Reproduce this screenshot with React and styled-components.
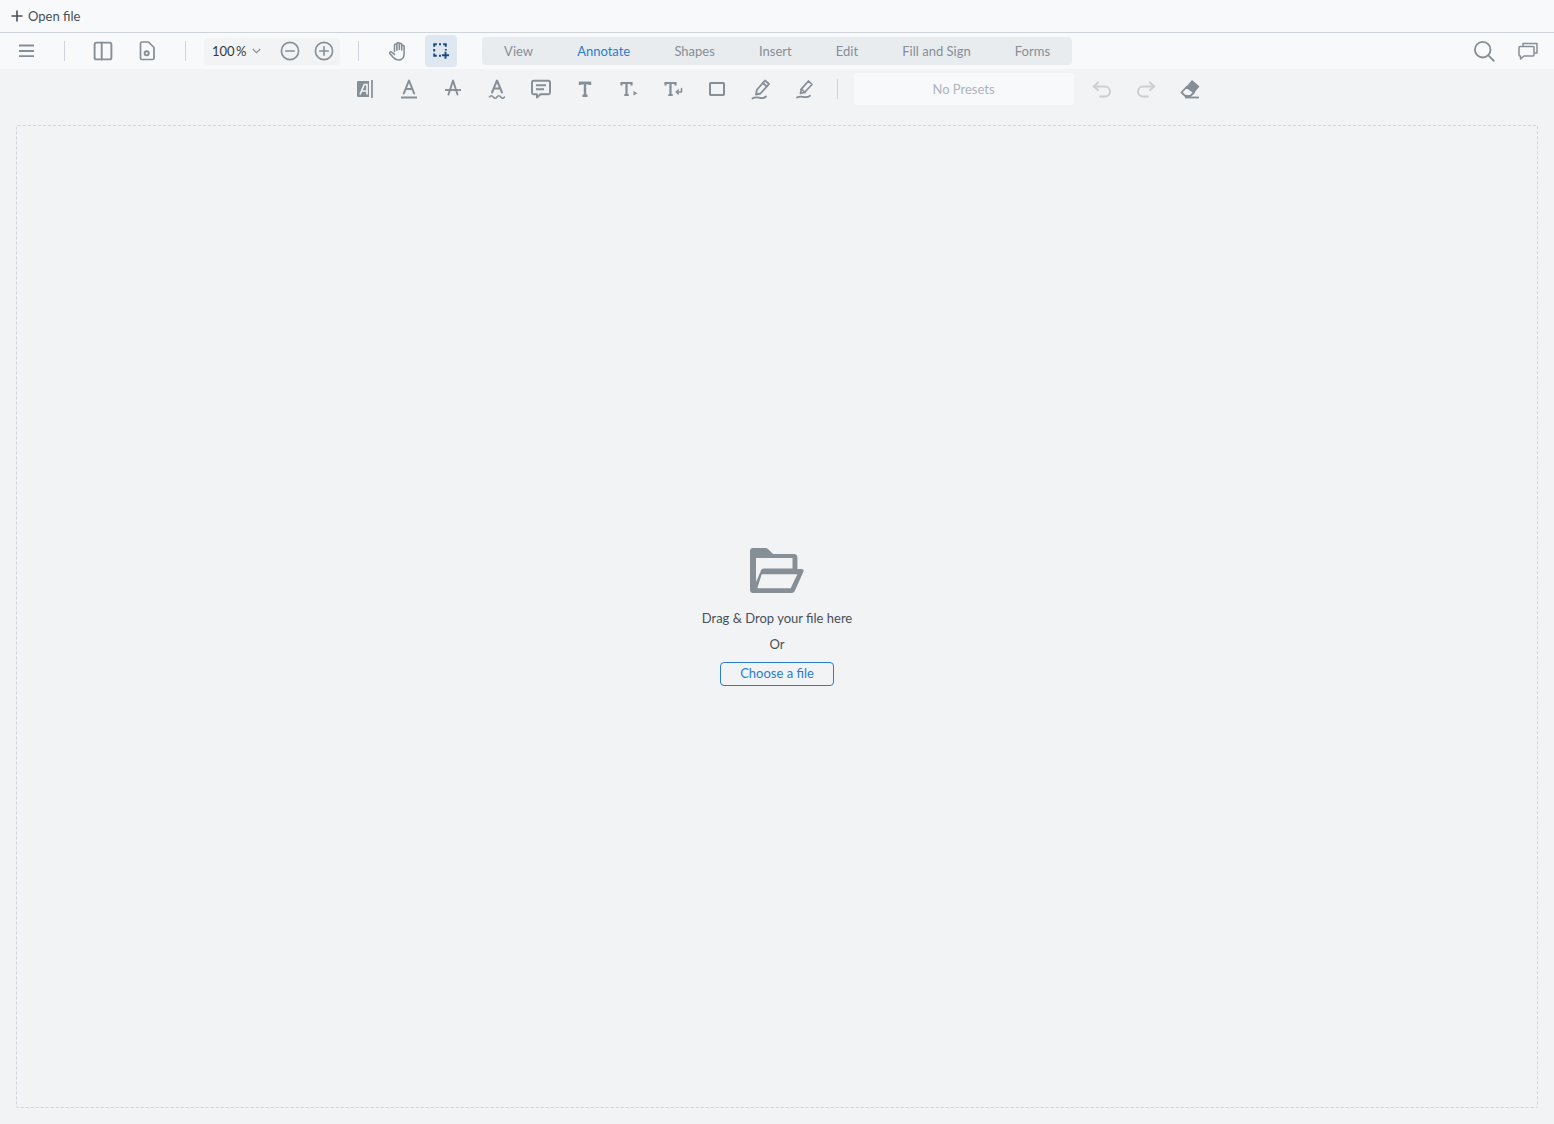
import React from 'react';
import styled, { createGlobalStyle } from 'styled-components';

const GlobalStyle = createGlobalStyle`
  html, body {
    margin: 0;
    padding: 0;
    height: 100%;
    background: #f1f3f5;
    font-family: Lato, "Open Sans", sans-serif;
  }
  svg {
    flex: none;
  }
`;

// icons are all drawn on a 24 box, stroke colour comes from the slot around them
const Svg = ({ size = 24, children, fill = 'none', sw = 2 }) => (
  <svg width={size} height={size} viewBox="0 0 24 24" fill={fill} stroke={fill === 'none' ? 'currentColor' : 'none'} strokeWidth={sw} strokeLinecap="round" strokeLinejoin="round">
    {children}
  </svg>
);

const MenuIcon = () => (
  <Svg sw={1.8}><path d="M5 6.500h15M5 12h15M5 17.200h15" strokeLinecap="butt" /></Svg>
);
const PanelIcon = () => (
  <Svg sw={1.9}><rect x="3.600" y="3.600" width="16.800" height="16.800" rx="2" /><path d="M10.700 3.600v16.800" /></Svg>
);
const FileGearIcon = () => (
  <Svg sw={1.7}>
    <path d="M7 3h6.500L19 8.500V19a1.500 1.500 0 0 1-1.500 1.500H7A1.500 1.500 0 0 1 5.500 19V4.500A1.500 1.500 0 0 1 7 3z" />
    <circle cx="11.700" cy="14.300" r="2.100" strokeWidth="1.900" />
  </Svg>
);
const MinusCircle = () => (
  <Svg sw={1.6}><circle cx="12" cy="12" r="8.600" /><path d="M7.800 12h8.400" /></Svg>
);
const PlusCircle = () => (
  <Svg sw={1.6}><circle cx="12" cy="12" r="8.600" /><path d="M7.800 12h8.400M12 7.800v8.400" /></Svg>
);
const HandIcon = () => (
  <Svg sw={1.6}>
    <path d="M8.500 12.500V6.200a1.200 1.200 0 0 1 2.400 0v5M10.900 10.500V4.800a1.200 1.200 0 0 1 2.400 0v5.700M13.300 10.500V5.600a1.200 1.200 0 0 1 2.400 0v5M15.700 11V7.400a1.200 1.200 0 0 1 2.400 0V15c0 3.600-2.400 6-5.600 6-2.600 0-4-1-5.400-2.800L3.900 14.600c-.9-1.100.7-2.500 1.800-1.500l2.800 2.200" />
  </Svg>
);
const SelectIcon = () => (
  <Svg sw={1.9}>
    <path d="M5.200 7.800V5.200h2.600M10 5.200h2M14.200 5.200h2.600v2.600M16.800 10v1.500M5.200 10v2.400M5.200 14.500v2.300h2.600M10 16.800h2" strokeLinecap="butt" strokeLinejoin="miter" />
    <path d="M16.500 12.800v7M13 16.300h7" strokeLinecap="butt" />
  </Svg>
);
const SearchIcon = () => (
  <Svg size={26} sw={1.7}><circle cx="10.800" cy="10.800" r="7.200" /><path d="M16 16l5 5" /></Svg>
);
const CommentsIcon = () => (
  <Svg sw={1.5}>
    <path d="M7 6.500V4.500h14v9.500h-2" />
    <path d="M4 7.500h13a1 1 0 0 1 1 1V16a1 1 0 0 1-1 1H8l-3.500 3v-3H4a1 1 0 0 1-1-1V8.500a1 1 0 0 1 1-1z" />
  </Svg>
);
const ReflowIcon = () => (
  <Svg>
    <path fill="currentColor" stroke="none" d="M5 4h11v16H5a1 1 0 0 1-1-1V5a1 1 0 0 1 1-1z" />
    <path d="M7 17.500L11.300 7.500H14V17.500M9 14H14" stroke="#f1f3f5" strokeWidth="1.700" strokeLinecap="butt" strokeLinejoin="miter" />
    <path d="M19 3v18" strokeWidth="1.700" strokeLinecap="butt" />
  </Svg>
);
const UnderlineIcon = () => (
  <Svg sw={2}><path d="M6.800 16.500L12 3.500l5.200 13M8.600 12h6.800" /><path d="M4 20.500h16" strokeLinecap="butt" /></Svg>
);
const StrikeIcon = () => (
  <Svg sw={1.900}><path d="M7.500 17.500L12 3.500l4.500 14" /><path d="M4 13h16" strokeLinecap="butt" /></Svg>
);
const SquigglyIcon = () => (
  <Svg sw={2}>
    <path d="M7 15.500L12 3.500l5 12M8.800 11.500h6.400" />
    <path d="M4.500 20c1.300-1.800 2.500-1.800 3.800 0s2.400 1.800 3.700 0 2.500-1.800 3.800 0 2.400 1.800 3.700 0" strokeWidth="1.500" />
  </Svg>
);
const NoteIcon = () => (
  <Svg sw={1.900}>
    <path d="M4.500 3.800h15A1.500 1.500 0 0 1 21 5.300v10.500a1.500 1.500 0 0 1-1.500 1.500H11.500l-3.500 3.300v-3.300H4.500A1.500 1.500 0 0 1 3 15.800V5.300a1.500 1.500 0 0 1 1.500-1.500z" />
    <path d="M7 8.300h10M7 12.300h8" strokeLinecap="butt" />
  </Svg>
);
const TextIcon = () => (
  <Svg sw={2.400}><path d="M7 8V6h10v2" strokeLinecap="butt" strokeLinejoin="miter" /><path d="M6 6h12M12 6v13M9.500 18.800h5" strokeLinecap="butt" strokeLinejoin="miter" /></Svg>
);
const CalloutIcon = () => (
  <Svg sw={2.200}>
    <path d="M4.500 8.500V6h10v2.500M4 6h11M9.500 6v12.800M7.300 18h4.400" strokeLinecap="butt" strokeLinejoin="miter" />
    <path fill="currentColor" stroke="none" d="M16.500 14l4 2.300-4 2.300z" />
  </Svg>
);
const ReplaceIcon = () => (
  <Svg sw={2.200}>
    <path d="M4.500 8.500V6h10v2.500M4 6h11M9.500 6v12.800M7.300 18h4.400" strokeLinecap="butt" strokeLinejoin="miter" />
    <path d="M20.500 11.500v3.500h-5M17.300 13L15.300 15l2 2" strokeWidth="1.500" />
  </Svg>
);
const RectIcon = () => (
  <Svg sw={2}><rect x="5" y="6" width="14" height="12" rx=".8" /></Svg>
);
const PenIcon = () => (
  <Svg sw={1.800}>
    <path d="M16 3.500l4 3.500-8.500 9.500-4.500 1 .8-4.500z" />
    <path d="M13.800 6l4 3.500" />
    <path d="M3.500 21.500c3-2 5-1 8-.5 2.500.4 4 0 5.500-1.500" />
  </Svg>
);
const HighlightIcon = () => (
  <Svg sw={1.700}>
    <path d="M15.500 4l3.500 3.500-7.500 8-4 .8.700-4.200z" />
    <path d="M8.500 12l3.500 3.500" />
    <path d="M4 20.500c3-1.800 5-.8 8-.4 2 .2 3.500-.2 5-1.300" strokeWidth="1.800" />
  </Svg>
);
const UndoIcon = () => (
  <Svg sw={2}><path d="M8 5.500L3.800 9.500 8 13" /><path d="M4 9.500h11a5 5 0 0 1 0 10h-5" /></Svg>
);
const RedoIcon = () => (
  <Svg sw={2}><path d="M16 5.500l4.200 4-4.200 3.500" /><path d="M20 9.500H9a5 5 0 0 0 0 10h5" /></Svg>
);
const EraserIcon = () => (
  <Svg>
    <path fill="currentColor" stroke="none" d="M14 3l7.500 6.500-5.500 6.500-7.500-6.500z" />
    <path d="M8.500 10L3.500 15.500l3.800 3.500h5l3.700-3.500z" strokeWidth="1.800" />
    <path d="M7 20.500h14" strokeWidth="1.800" strokeLinecap="butt" />
  </Svg>
);
const PlusIcon = () => (
  <svg width="12" height="12" viewBox="0 0 12 12" stroke="currentColor" strokeWidth="1.600"><path d="M6 .5v11M.5 6h11" /></svg>
);
const ChevronIcon = () => (
  <svg width="9" height="6" viewBox="0 0 9 6" fill="none" stroke="currentColor" strokeWidth="1.100"><path d="M.8 1l3.700 3.700L8.200 1" /></svg>
);
const FolderIcon = () => (
  <svg width="54" height="46" viewBox="0 -1 54 46" fill="#868e96">
    <path fillRule="evenodd" d="M3 0h12c1.500 0 2.500.5 3.500 1.500L22.500 5.500c.6.400 1.200.5 2 .5H44c2.200 0 3.400 1.300 3.400 3.400V21h4c1.700 0 2.600 1.200 2 2.800L45 42.500c-.6 1.500-1.700 2.500-3.400 2.500H3c-2 0-3-1-3-3V3c0-2 1-3 3-3zM6 10v24l5-11.500c.6-1.400 1.600-2 3-2h28.500V10zM11.700 26.300L7.300 40.300h33.400l6.600-14z" />
  </svg>
);

const Page = styled.div`
  display: flex;
  flex-direction: column;
  height: 1124px;
  overflow: hidden;
  background: #f1f3f5;
`;

const TitleBar = styled.div`
  display: flex;
  align-items: center;
  gap: 5px;
  height: 32px;
  padding-left: 11px;
  background: #f8f9fa;
  border-bottom: 1px solid #ced4da;
  color: #495057;
  font-size: 13px;
`;

const MainBar = styled.div`
  display: flex;
  align-items: center;
  height: 36px;
  background: #f8f9fa;
  color: #868e96;
`;

const Slot = styled.div`
  flex: none;
  display: flex;
  align-items: center;
  justify-content: center;
  width: ${p => p.$w || 44}px;
  height: ${p => p.$h || 32}px;
  margin-left: ${p => p.$ml || 0}px;
  border-radius: 4px;
  color: ${p => p.$active ? '#1a4a7c' : 'inherit'};
  background: ${p => p.$active ? '#dfe7f0' : 'transparent'};
  opacity: ${p => p.$dim ? 0.35 : 1};
`;

const Divider = styled.div`
  flex: none;
  width: 1px;
  height: 20px;
  margin-left: ${p => p.$ml || 0}px;
  background: #ced4da;
`;

const ZoomBox = styled.div`
  flex: none;
  display: flex;
  align-items: center;
  width: 136px;
  height: 27px;
  margin-left: 18px;
  border-radius: 4px;
  background: #f1f3f5;
`;

const ZoomValue = styled.span`
  margin-left: 8px;
  margin-right: 5px;
  width: 35px;
  color: #343a40;
  font-size: 13px;
  word-spacing: -2px;
  white-space: nowrap;
`;

const Tabs = styled.div`
  flex: none;
  display: flex;
  align-items: center;
  width: 590px;
  height: 28px;
  margin-left: 25px;
  border-radius: 4px;
  background: #e9ecef;
`;

const Tab = styled.div`
  flex: none;
  padding: 0 22.08px;
  font-size: 13px;
  white-space: nowrap;
  color: ${p => p.$active ? '#2b7dd1' : '#868e96'};
`;

const RightGroup = styled.div`
  display: flex;
  margin-left: auto;
  margin-right: 4px;
`;

const ToolBar = styled.div`
  display: flex;
  align-items: center;
  justify-content: center;
  height: 32px;
  padding: 4px 0 3px;
  color: #868e96;
`;

const Presets = styled.div`
  flex: none;
  display: flex;
  align-items: center;
  justify-content: center;
  width: 220px;
  height: 32px;
  margin: 0 6px 0 16px;
  border-radius: 4px;
  background: #f8f9fa;
  color: #adb5bd;
  font-size: 13px;
`;

const Body = styled.div`
  flex: 1;
  display: flex;
  padding: 17px 16px 16px;
  min-height: 0;
`;

const DropZone = styled.div`
  flex: 1;
  display: flex;
  flex-direction: column;
  align-items: center;
  justify-content: center;
  padding-bottom: 1px;
  border: 1px dashed #ced4da;
  border-radius: 2px;
  color: #495057;
  font-size: 13px;
`;

const DropText = styled.div`
  line-height: 18px;
  margin-top: ${p => p.$mt}px;
`;

const ChooseButton = styled.button`
  width: 114px;
  height: 24px;
  margin-top: 9px;
  padding: 0 0 2px;
  border: 1px solid #2b7dd1;
  border-radius: 4px;
  background: transparent;
  color: #2b7dd1;
  font: inherit;
`;

const toolIcons = [ReflowIcon, UnderlineIcon, StrikeIcon, SquigglyIcon, NoteIcon, TextIcon, CalloutIcon, ReplaceIcon, RectIcon, PenIcon, HighlightIcon];
const tabs = ['View', 'Annotate', 'Shapes', 'Insert', 'Edit', 'Fill and Sign', 'Forms'];

export default function App() {
  return (
    <Page>
      <GlobalStyle />
      <TitleBar>
        <PlusIcon />
        Open file
      </TitleBar>
      <MainBar>
        <Slot $w={32} $ml={10}><MenuIcon /></Slot>
        <Divider $ml={22} />
        <Slot $w={44} $ml={16}><PanelIcon /></Slot>
        <Slot $w={44}><FileGearIcon /></Slot>
        <Divider $ml={16} />
        <ZoomBox>
          <ZoomValue>100 %</ZoomValue>
          <ChevronIcon />
          <Slot $w={34} $ml={12}><MinusCircle /></Slot>
          <Slot $w={32} $ml={1}><PlusCircle /></Slot>
        </ZoomBox>
        <Divider $ml={18} />
        <Slot $w={44} $ml={17}><HandIcon /></Slot>
        <Slot $w={32} $active $ml={5}><SelectIcon /></Slot>
        <Tabs>
          {tabs.map(t => <Tab key={t} $active={t === 'Annotate'}>{t}</Tab>)}
        </Tabs>
        <RightGroup>
          <Slot><SearchIcon /></Slot>
          <Slot><CommentsIcon /></Slot>
        </RightGroup>
      </MainBar>
      <ToolBar>
        {toolIcons.map((Icon, i) => <Slot key={i}><Icon /></Slot>)}
        <Divider $ml={10} />
        <Presets>No Presets</Presets>
        <Slot $dim><UndoIcon /></Slot>
        <Slot $dim><RedoIcon /></Slot>
        <Slot><EraserIcon /></Slot>
      </ToolBar>
      <Body>
        <DropZone>
          <FolderIcon />
          <DropText $mt={16}>Drag &amp; Drop your file here</DropText>
          <DropText $mt={8}>Or</DropText>
          <ChooseButton>Choose a file</ChooseButton>
        </DropZone>
      </Body>
    </Page>
  );
}
